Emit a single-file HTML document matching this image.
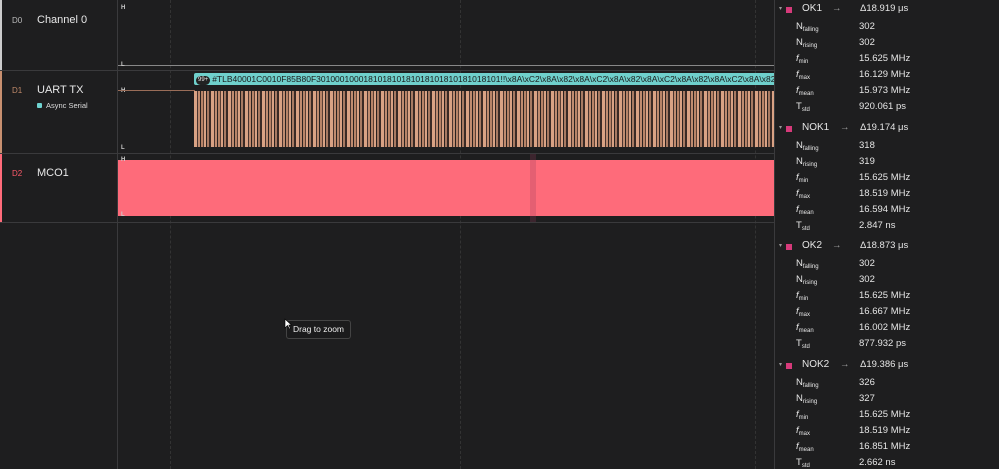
<!DOCTYPE html>
<html><head><style>
*{margin:0;padding:0;box-sizing:border-box}
html,body{width:999px;height:469px;overflow:hidden}
body{background:#1e1e1f;font-family:"Liberation Sans",sans-serif;color:#ddd;position:relative}
.a{position:absolute}
.hl{position:absolute;height:1px;background:#3a3a3c}
.dash{position:absolute;top:0;width:0;height:469px;border-left:1px dashed #333}
.lbl{position:absolute;font-size:11px;color:#e8e8e8}
.ch{position:absolute;font-size:8px}
.hm{position:absolute;font-size:6px;color:#ccc;font-weight:bold}
.side{position:absolute;left:774px;top:0;width:225px;height:469px;background:#1e1e1f;border-left:1px solid #3a3a3c}
.r{position:absolute;font-size:9.5px;color:#e6e6e6;white-space:nowrap;line-height:12px}
.r sub{font-size:6px;vertical-align:-2px}
.v{position:absolute;left:85px;font-size:9.5px;color:#e6e6e6;white-space:nowrap;line-height:12px}
</style></head><body>
<div class="a" style="left:0;top:0;width:2px;height:70px;background:#ccc"></div>
<div class="a" style="left:0;top:71px;width:2px;height:82px;background:#c89070"></div>
<div class="a" style="left:0;top:154px;width:2px;height:68px;background:#ff6b7a"></div>
<div class="a" style="left:117px;top:0;width:1px;height:469px;background:#3a3a3c"></div>
<div class="dash" style="left:170px"></div>
<div class="dash" style="left:460px"></div>
<div class="dash" style="left:755px"></div>
<div class="hl" style="left:0;top:70px;width:774px"></div>
<div class="hl" style="left:0;top:153px;width:774px"></div>
<div class="hl" style="left:0;top:222px;width:774px"></div>
<div class="ch" style="left:12px;top:16px;color:#bbb">D0</div>
<div class="lbl" style="left:37px;top:14px">Channel 0</div>
<div class="ch" style="left:12px;top:86px;color:#c08a6a">D1</div>
<div class="lbl" style="left:37px;top:84px">UART TX</div>
<div class="a" style="left:37px;top:103px;width:5px;height:5px;background:#6fd3d0;border-radius:1px"></div>
<div class="a" style="left:46px;top:101px;font-size:7.5px;color:#ddd">Async Serial</div>
<div class="ch" style="left:12px;top:169px;color:#ff5a6a">D2</div>
<div class="lbl" style="left:37px;top:167px">MCO1</div>
<div class="hm" style="left:121px;top:5px">H</div>
<div class="a" style="left:118px;top:65px;width:656px;height:1px;background:#888"></div>
<div class="hm" style="left:121px;top:62px">L</div>
<div class="hm" style="left:121px;top:88px">H</div>
<div class="a" style="left:118px;top:90px;width:77px;height:1px;background:#9a6d58"></div>
<div class="hm" style="left:121px;top:145px">L</div>
<div class="a" style="left:194px;top:91px;width:580px;height:56px;background:
repeating-linear-gradient(90deg,#d9a284 0 3px,#4a3530 3px 4px,#c08c70 4px 6px,#2a2220 6px 7px,#b88468 7px 9px,#5a4035 9px 10px,#d9a284 10px 12px,#2a2220 12px 13px,#a87a62 13px 15px,#3a2a25 15px 17px)"></div>
<div class="a" style="left:194px;top:73px;width:580px;height:12px;background:#6fd0cc;border-radius:2px 0 0 2px;overflow:hidden;white-space:nowrap;font-size:8.5px;color:#1a1a1a;line-height:12px">
<span style="display:inline-block;background:#222;color:#eee;font-size:6px;border-radius:5px;padding:0 2px;line-height:9px;margin:0 2px 0 2px;vertical-align:1px">99+</span>#TLB40001C0010F85B80F301000100018101810181018101810181018101!!\x8A\xC2\x8A\x82\x8A\xC2\x8A\x82\x8A\xC2\x8A\x82\x8A\xC2\x8A\x82</div>
<div class="a" style="left:118px;top:160px;width:656px;height:56px;background:#fe6b7a"></div>
<div class="a" style="left:530px;top:154px;width:6px;height:68px;background:rgba(150,60,90,0.25)"></div>
<div class="hm" style="left:121px;top:157px">H</div>
<div class="hm" style="left:121px;top:212px">L</div>
<div class="a" style="left:286px;top:320px;width:65px;height:19px;border:1px solid #444;border-radius:3px;background:#1b1b1c;font-size:8.5px;color:#eee;line-height:17px;text-align:center">Drag to zoom</div>
<svg class="a" style="left:284px;top:318px" width="8" height="12"><path d="M1 1 L1 10 L3.5 7.5 L5.5 11 L6.5 10.5 L4.8 7 L7.5 7 Z" fill="#fff" stroke="#000" stroke-width="0.6"/></svg>
<div class="side"></div>
<div class="a" style="left:774px;top:0">
 <div class="a" style="top:3px">
  <div class="r" style="left:5px;top:0;font-size:6px;color:#999">▾</div><div class="a" style="left:12px;top:4px;width:6px;height:6px;background:#d63a7a"></div>
  <div class="r" style="left:28px;top:0;font-size:10px">OK1</div><div class="r" style="left:58px;top:0;color:#aaa">→</div><div class="r" style="left:86px;top:0">Δ18.919 μs</div>
  <div class="r" style="left:22px;top:18px">N<sub>falling</sub></div><div class="v" style="top:18px">302</div>
  <div class="r" style="left:22px;top:34px">N<sub>rising</sub></div><div class="v" style="top:34px">302</div>
  <div class="r" style="left:22px;top:50px"><i>f</i><sub>min</sub></div><div class="v" style="top:50px">15.625 MHz</div>
  <div class="r" style="left:22px;top:66px"><i>f</i><sub>max</sub></div><div class="v" style="top:66px">16.129 MHz</div>
  <div class="r" style="left:22px;top:82px"><i>f</i><sub>mean</sub></div><div class="v" style="top:82px">15.973 MHz</div>
  <div class="r" style="left:22px;top:98px">T<sub>std</sub></div><div class="v" style="top:98px">920.061 ps</div>
 </div>
 <div class="a" style="top:122px">
  <div class="r" style="left:5px;top:0;font-size:6px;color:#999">▾</div><div class="a" style="left:12px;top:4px;width:6px;height:6px;background:#d63a7a"></div>
  <div class="r" style="left:28px;top:0;font-size:10px">NOK1</div><div class="r" style="left:66px;top:0;color:#aaa">→</div><div class="r" style="left:86px;top:0">Δ19.174 μs</div>
  <div class="r" style="left:22px;top:18px">N<sub>falling</sub></div><div class="v" style="top:18px">318</div>
  <div class="r" style="left:22px;top:34px">N<sub>rising</sub></div><div class="v" style="top:34px">319</div>
  <div class="r" style="left:22px;top:50px"><i>f</i><sub>min</sub></div><div class="v" style="top:50px">15.625 MHz</div>
  <div class="r" style="left:22px;top:66px"><i>f</i><sub>max</sub></div><div class="v" style="top:66px">18.519 MHz</div>
  <div class="r" style="left:22px;top:82px"><i>f</i><sub>mean</sub></div><div class="v" style="top:82px">16.594 MHz</div>
  <div class="r" style="left:22px;top:98px">T<sub>std</sub></div><div class="v" style="top:98px">2.847 ns</div>
 </div>
 <div class="a" style="top:240px">
  <div class="r" style="left:5px;top:0;font-size:6px;color:#999">▾</div><div class="a" style="left:12px;top:4px;width:6px;height:6px;background:#d63a7a"></div>
  <div class="r" style="left:28px;top:0;font-size:10px">OK2</div><div class="r" style="left:58px;top:0;color:#aaa">→</div><div class="r" style="left:86px;top:0">Δ18.873 μs</div>
  <div class="r" style="left:22px;top:18px">N<sub>falling</sub></div><div class="v" style="top:18px">302</div>
  <div class="r" style="left:22px;top:34px">N<sub>rising</sub></div><div class="v" style="top:34px">302</div>
  <div class="r" style="left:22px;top:50px"><i>f</i><sub>min</sub></div><div class="v" style="top:50px">15.625 MHz</div>
  <div class="r" style="left:22px;top:66px"><i>f</i><sub>max</sub></div><div class="v" style="top:66px">16.667 MHz</div>
  <div class="r" style="left:22px;top:82px"><i>f</i><sub>mean</sub></div><div class="v" style="top:82px">16.002 MHz</div>
  <div class="r" style="left:22px;top:98px">T<sub>std</sub></div><div class="v" style="top:98px">877.932 ps</div>
 </div>
 <div class="a" style="top:359px">
  <div class="r" style="left:5px;top:0;font-size:6px;color:#999">▾</div><div class="a" style="left:12px;top:4px;width:6px;height:6px;background:#d63a7a"></div>
  <div class="r" style="left:28px;top:0;font-size:10px">NOK2</div><div class="r" style="left:66px;top:0;color:#aaa">→</div><div class="r" style="left:86px;top:0">Δ19.386 μs</div>
  <div class="r" style="left:22px;top:18px">N<sub>falling</sub></div><div class="v" style="top:18px">326</div>
  <div class="r" style="left:22px;top:34px">N<sub>rising</sub></div><div class="v" style="top:34px">327</div>
  <div class="r" style="left:22px;top:50px"><i>f</i><sub>min</sub></div><div class="v" style="top:50px">15.625 MHz</div>
  <div class="r" style="left:22px;top:66px"><i>f</i><sub>max</sub></div><div class="v" style="top:66px">18.519 MHz</div>
  <div class="r" style="left:22px;top:82px"><i>f</i><sub>mean</sub></div><div class="v" style="top:82px">16.851 MHz</div>
  <div class="r" style="left:22px;top:98px">T<sub>std</sub></div><div class="v" style="top:98px">2.662 ns</div>
 </div>
</div>
</body></html>
